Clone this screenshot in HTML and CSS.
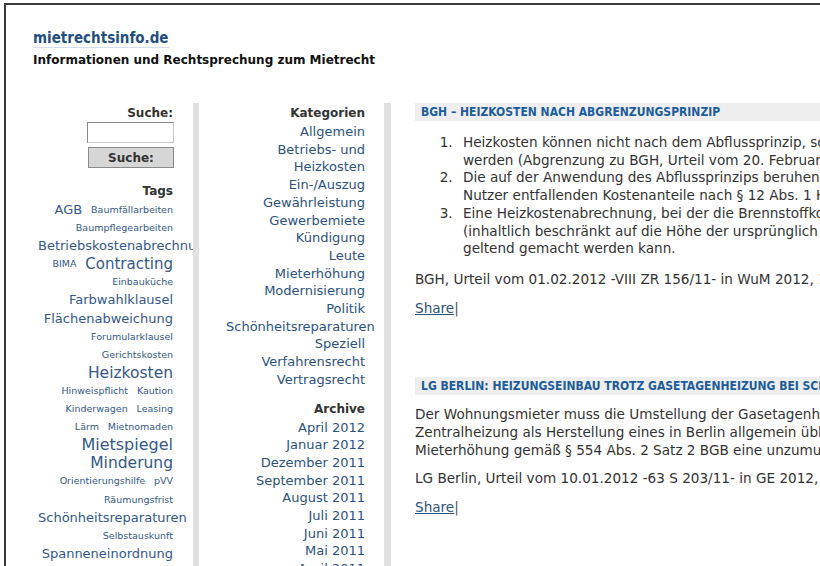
FILE: index.html
```html
<!DOCTYPE html>
<html lang="de">
<head>
    <meta charset="UTF-8">
    <title>mietrechtsinfo.de</title>
    <link rel="stylesheet" href="styles.css">
</head>
<body>

<div class="page">
    <div class="masthead">
        <a class="site-title" href="#">mietrechtsinfo.de</a>
        <p class="tagline">Informationen und Rechtsprechung zum Mietrecht</p>
    </div>

    <div class="layout">
        <div class="sidebar sidebar-left">
            <h3>Suche:</h3>
            <form class="search">
                <input type="text">
                <button type="button">Suche:</button>
            </form>

            <h3 class="tags-title">Tags</h3>
            <div class="tagcloud">
                <a class="t13" href="#">AGB</a> <a class="t9" href="#">Baumfällarbeiten</a>
                <a class="t9" href="#">Baumpflegearbeiten</a>
                <a class="t13" href="#">Betriebskostenabrechnung</a>
                <a class="t9" href="#">BIMA</a> <a class="t15" href="#">Contracting</a>
                <a class="t9" href="#">Einbauküche</a>
                <a class="t13" href="#">Farbwahlklausel</a>
                <a class="t13" href="#">Flächenabweichung</a>
                <a class="t9" href="#">Forumularklausel</a>
                <a class="t9" href="#">Gerichtskosten</a>
                <a class="t16" href="#">Heizkosten</a>
                <a class="t9" href="#">Hinweispflicht</a> <a class="t9" href="#">Kaution</a>
                <a class="t9" href="#">Kinderwagen</a> <a class="t9" href="#">Leasing</a>
                <a class="t9" href="#">Lärm</a> <a class="t9" href="#">Mietnomaden</a>
                <a class="t17" href="#">Mietspiegel</a>
                <a class="t16" href="#">Minderung</a>
                <a class="t9" href="#">Orientierungshilfe</a> <a class="t9" href="#">pVV</a>
                <a class="t9" href="#">Räumungsfrist</a>
                <a class="t13" href="#">Schönheitsreparaturen</a>
                <a class="t9" href="#">Selbstauskunft</a>
                <a class="t13" href="#">Spanneneinordnung</a>
            </div>
        </div>

        <div class="sidebar sidebar-mid">
            <h3>Kategorien</h3>
            <ul class="links">
                <li><a href="#">Allgemein</a></li>
                <li><a href="#">Betriebs- und Heizkosten</a></li>
                <li><a href="#">Ein-/Auszug</a></li>
                <li><a href="#">Gewährleistung</a></li>
                <li><a href="#">Gewerbemiete</a></li>
                <li><a href="#">Kündigung</a></li>
                <li><a href="#">Leute</a></li>
                <li><a href="#">Mieterhöhung</a></li>
                <li><a href="#">Modernisierung</a></li>
                <li><a href="#">Politik</a></li>
                <li><a href="#">Schönheitsreparaturen</a></li>
                <li><a href="#">Speziell</a></li>
                <li><a href="#">Verfahrensrecht</a></li>
                <li><a href="#">Vertragsrecht</a></li>
            </ul>

            <h3 class="archive-title">Archive</h3>
            <ul class="links">
                <li><a href="#">April 2012</a></li>
                <li><a href="#">Januar 2012</a></li>
                <li><a href="#">Dezember 2011</a></li>
                <li><a href="#">September 2011</a></li>
                <li><a href="#">August 2011</a></li>
                <li><a href="#">Juli 2011</a></li>
                <li><a href="#">Juni 2011</a></li>
                <li><a href="#">Mai 2011</a></li>
                <li><a href="#">April 2011</a></li>
            </ul>
        </div>

        <div class="content">
            <div class="post">
                <h2 class="post-title"><a href="#">BGH – Heizkosten nach Abgrenzungsprinzip</a></h2>
                <ol>
                    <li>Heizkosten können nicht nach dem Abflussprinzip, sondern nach dem Leistungsprinzip abgerechnet werden (Abgrenzung zu BGH, Urteil vom 20. Februar 2008 - VIII ZR 49/07).</li>
                    <li>Die auf der Anwendung des Abflussprinzips beruhende Abrechnung ist nicht unwirksam; die auf die Nutzer entfallenden Kostenanteile nach § 12 Abs. 1 HeizkostenV um 15 % zu kürzen.</li>
                    <li>Eine Heizkostenabrechnung, bei der die Brennstoffkosten nach dem Abflussprinzip erfasst sind, ist (inhaltlich beschränkt auf die Höhe der ursprünglich berechneten Kosten) wirksam, soweit sie noch geltend gemacht werden kann.</li>
                </ol>
                <p>BGH, Urteil vom 01.02.2012 -VIII ZR 156/11- in WuM 2012, 143</p>
                <p class="share"><a href="#">Share</a>|</p>
            </div>

            <div class="post">
                <h2 class="post-title"><a href="#">LG Berlin: Heizungseinbau trotz Gasetagenheizung bei schlechtem Zustand</a></h2>
                <p>Der Wohnungsmieter muss die Umstellung der Gasetagenheizung auf eine vom Vermieter neu eingebaute Zentralheizung als Herstellung eines in Berlin allgemein üblichen Zustandes dulden, ohne dass hier die Mieterhöhung gemäß § 554 Abs. 2 Satz 2 BGB eine unzumutbare Härte darstellt.</p>
                <p>LG Berlin, Urteil vom 10.01.2012 -63 S 203/11- in GE 2012, 404</p>
                <p class="share"><a href="#">Share</a>|</p>
            </div>
        </div>
    </div>
</div>

</body>
</html>
```

FILE: styles.css
```css
html {
    overflow: hidden;
}

body {
    margin: 0;
    background-color: white;
    color: #333;
    font-family: "DejaVu Sans", Verdana, sans-serif;
    font-size: 13px;
}

a {
    color: #2b5382;
    text-decoration: none;
}

.page {
    margin: 3px 0 0 4px;
    width: 1200px;
    border-top: 2px solid #3c3c3c;
    border-left: 2px solid #3c3c3c;
}

.masthead {
    padding: 24px 0 0 27px;
    height: 74px;
}

.site-title {
    font-family: "DejaVu Sans Condensed", "DejaVu Sans", sans-serif;
    font-size: 15px;
    font-weight: bold;
    color: #1f4f82;
    border-bottom: 1px solid #d8dee8;
}

.tagline {
    margin: 6px 0 0;
    font-size: 12px;
    font-weight: bold;
    color: #111;
}

.layout {
    display: flex;
    align-items: stretch;
    min-height: 480px;
}

.sidebar {
    flex: none;
    width: 140px;
    text-align: right;
    overflow: hidden;
}

.sidebar h3 {
    margin: 0;
    font-size: 12px;
    line-height: 16px;
    color: #333;
}

.sidebar-left {
    padding: 2px 20px 0 27px;
    border-right: 6px solid #e1e1e1;
}

.sidebar-mid {
    padding: 2px 19px 0 27px;
    width: 139px;
    border-right: 7px solid #e1e1e1;
}

.search {
    margin: 1px 0 0;
}

.search input {
    box-sizing: border-box;
    display: block;
    margin: 0 -1px 0 auto;
    width: 87px;
    height: 21px;
    border: 1px solid #8a8a8a;
    border-right-color: #c8c8c8;
    border-bottom-color: #c8c8c8;
    background-color: white;
}

.search button {
    box-sizing: border-box;
    display: block;
    margin: 4px -1px 0 auto;
    width: 86px;
    height: 21px;
    border: 1px solid #8a8a8a;
    background-color: #d6d6d6;
    font-family: "DejaVu Sans", Verdana, sans-serif;
    font-size: 12px;
    font-weight: bold;
    color: #333;
    padding: 0;
}

.tags-title {
    margin-top: 15px !important;
}

.tagcloud {
    margin-top: 2px;
    line-height: 18.1px;
    font-size: 12px;
}

.tagcloud a {
    display: inline-block;
    vertical-align: top;
    line-height: 18.1px;
    margin-left: 5px;
    color: #34598a;
}

.t9 { font-size: 9.5px; }
.t13 { font-size: 13px; }
.t15 { font-size: 15px; }
.t16 { font-size: 15.5px; }
.t17 { font-size: 16px; }

.links {
    list-style: none;
    margin: 2px 0 0;
    padding: 0;
    line-height: 17.7px;
}

.archive-title {
    margin-top: 12px !important;
}

.content {
    flex: none;
    width: 738px;
    padding-left: 24px;
    font-size: 13.6px;
}

.post {
    margin-bottom: 60px;
}

.post-title {
    margin: 0;
    padding: 0 6px;
    height: 18px;
    line-height: 18px;
    background-color: #eeeeee;
    font-family: "DejaVu Sans Condensed", "DejaVu Sans", sans-serif;
    font-size: 12px;
    text-transform: uppercase;
}

.post-title a {
    color: #1c5c9c;
}

.post ol {
    margin: 13px 0 0;
    padding-left: 42px;
    line-height: 17.7px;
}

.post li {
    padding-left: 6px;
}

.post p {
    margin: 11px 0 0;
    line-height: 17.7px;
}

.post ol + p {
    margin-top: 13px;
}

.share {
    color: #555;
}

.share a {
    text-decoration: underline;
}
```
